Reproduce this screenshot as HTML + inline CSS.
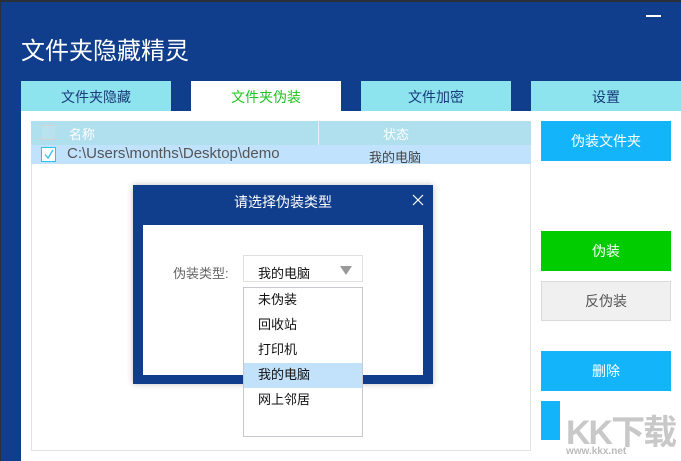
<!DOCTYPE html>
<html><head><meta charset="utf-8"><style>
*{margin:0;padding:0;box-sizing:border-box}
body{width:681px;height:461px;overflow:hidden;background:#103e8c;font-family:"Liberation Sans","Noto Sans CJK SC",sans-serif;position:relative}
.a{position:absolute}
.tab{position:absolute;top:81px;height:30px;width:150px;background:#8de3ee;color:#1a3b7a;font-size:14px;text-align:center;line-height:32px}
.btn{position:absolute;left:541px;width:130px;height:40px;color:#fff;font-size:14px;text-align:center;line-height:40px}
.it{height:25px;line-height:23px;padding-left:14px;font-size:13px;color:#111}
</style></head><body>
<div class="a" style="left:0;top:0;width:681px;height:2px;background:#2a2f3a"></div>
<div class="a" style="left:0;top:0;width:1px;height:461px;background:#2a2f3a"></div>
<div class="a" style="left:646px;top:15px;width:15px;height:1.5px;background:#fff"></div>
<div class="a" style="left:21px;top:31px;font-size:24px;color:#fff">文件夹隐藏精灵</div>
<div class="tab" style="left:21px">文件夹隐藏</div>
<div class="tab" style="left:191px;background:#fff;color:#1fc21f">文件夹伪装</div>
<div class="tab" style="left:361px">文件加密</div>
<div class="tab" style="left:531px">设置</div>
<div class="a" style="left:21px;top:111px;width:660px;height:350px;background:#fff"></div>
<div class="a" style="left:31px;top:121px;width:500px;height:330px;border:1px solid #e2e2e2;border-top:none"></div>
<div class="a" style="left:31px;top:121px;width:500px;height:24px;background:#b0dfee"></div>
<div class="a" style="left:318px;top:121px;width:1px;height:24px;background:#e6f4f8"></div>
<div class="a" style="left:41px;top:125px;width:15px;height:15px;border:1px solid #d3d3d3;background:#b8e2ef"></div>
<div class="a" style="left:69px;top:124px;font-size:13px;color:#fff">名称</div>
<div class="a" style="left:383px;top:124px;font-size:13px;color:#fff">状态</div>
<div class="a" style="left:31px;top:145px;width:500px;height:19px;background:#c0e2fc"></div>
<div class="a" style="left:41px;top:147px;width:15px;height:15px;border:1px solid #2ac4e8;background:#fff"></div>
<svg class="a" style="left:41px;top:147px" width="15" height="15"><path d="M4 7.5 L7 11 L12 3" stroke="#2ac4e8" stroke-width="1.3" fill="none"/></svg>
<div class="a" style="left:67px;top:145px;font-size:15px;color:#555">C:\Users\months\Desktop\demo</div>
<div class="a" style="left:369px;top:147px;font-size:13px;color:#444">我的电脑</div>
<div class="btn" style="top:121px;background:#14b4fb">伪装文件夹</div>
<div class="btn" style="top:231px;background:#00cc00">伪装</div>
<div class="btn" style="top:281px;background:#f0f0f0;border:1px solid #dadada;color:#555;line-height:38px">反伪装</div>
<div class="btn" style="top:351px;background:#14b4fb">删除</div>
<div class="a" style="left:541px;top:401px;width:19px;height:39px;background:#14b4fb"></div>
<div class="a" style="left:566px;top:405px;font-size:34px;font-weight:bold;color:#c8c8c8;letter-spacing:-2px">KK下载</div>
<div class="a" style="left:566px;top:446px;font-size:10px;font-weight:bold;color:#bbb">www.kkx.net</div>
<div class="a" style="left:133px;top:185px;width:300px;height:199px;background:#103e8c;box-shadow:0 0 6px rgba(0,0,0,.25)"></div>
<div class="a" style="left:133px;top:192px;width:300px;text-align:center;font-size:14px;color:#fff">请选择伪装类型</div>
<svg class="a" style="left:412px;top:194px" width="12" height="12"><path d="M1 1 L11 11 M11 1 L1 11" stroke="#fff" stroke-width="1.2"/></svg>
<div class="a" style="left:143px;top:225px;width:280px;height:150px;background:#fff"></div>
<div class="a" style="left:173px;top:263px;font-size:13px;color:#666">伪装类型:</div>
<div class="a" style="left:243px;top:255px;width:120px;height:27px;border:1px solid #e0e0e0;background:#fff"></div>
<div class="a" style="left:258px;top:263px;font-size:13px;color:#111">我的电脑</div>
<div class="a" style="left:340px;top:266px;width:0;height:0;border-left:6px solid transparent;border-right:6px solid transparent;border-top:9px solid #999"></div>
<div class="a" style="left:243px;top:287px;width:120px;height:150px;border:1px solid #c8c8d0;background:#fff">
<div class="it">未伪装</div><div class="it">回收站</div><div class="it">打印机</div>
<div class="it" style="background:#c2e2fb">我的电脑</div><div class="it">网上邻居</div></div>
</body></html>
